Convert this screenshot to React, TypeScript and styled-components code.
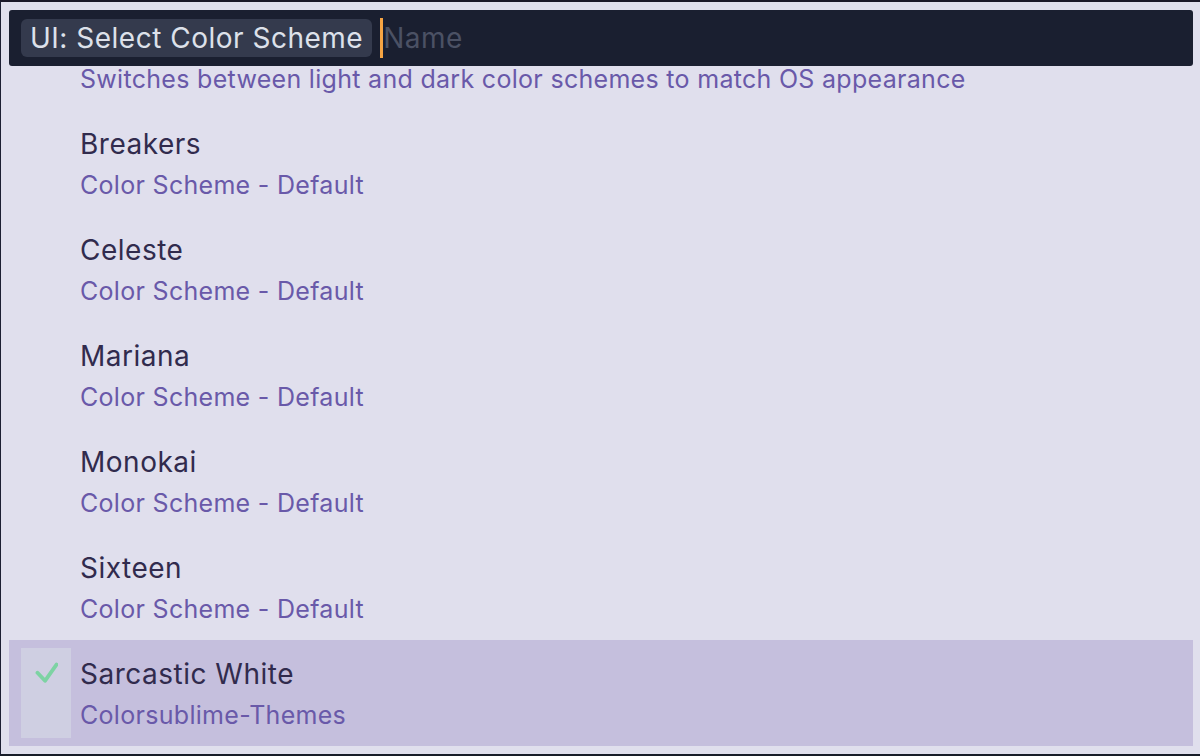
import React from "react";
import styled, { createGlobalStyle } from "styled-components";

const GlobalStyle = createGlobalStyle`
  html, body {
    margin: 0;
    padding: 0;
    background: #1a1a28;
  }
  * {
    box-sizing: border-box;
  }
`;

const Frame = styled.div`
  width: 1200px;
  height: 756px;
  border-top: 2px solid #1a1828;
  border-left: 1px solid #1d1f33;
  border-bottom: 2px solid #171c28;
  background: #e0dfed;
  padding: 8px 7px 8px 8px;
  display: flex;
  flex-direction: column;
  font-family: Inter, "Noto Sans", sans-serif;
  overflow: hidden;
`;

const InputBar = styled.div`
  height: 56px;
  flex-shrink: 0;
  background: #1a1f30;
  border-radius: 3px;
  display: flex;
  align-items: center;
  padding: 0 12px;
  position: relative;
  z-index: 2;
`;

const Chip = styled.div`
  height: 38px;
  padding: 0 9px;
  border-radius: 6px;
  background: #343a4d;
  color: #dde1ea;
  font-size: 28px;
  letter-spacing: 0.5px;
  display: flex;
  align-items: center;
  white-space: nowrap;
`;

const Caret = styled.span`
  width: 3px;
  height: 40px;
  margin-left: 8px;
  background: #f6a443;
`;

const Placeholder = styled.span`
  color: #4b5164;
  font-size: 28px;
  letter-spacing: 0.5px;
`;

const Viewport = styled.div`
  flex: 1;
  overflow: hidden;
`;

const List = styled.div<{ $offset: number }>`
  margin-top: ${(p) => -p.$offset}px;
  display: flex;
  flex-direction: column;
`;

const Row = styled.div<{ $selected?: boolean }>`
  height: 106px;
  display: flex;
  padding: 8px 0 8px 12px;
  background: ${(p) => (p.$selected ? "#c5bfdd" : "transparent")};
`;

const CheckCell = styled.div<{ $selected?: boolean }>`
  width: 50px;
  height: 90px;
  flex-shrink: 0;
  background: ${(p) => (p.$selected ? "#cfcfe2" : "transparent")};
  display: flex;
  justify-content: center;
  padding-top: 14px;
`;

const Texts = styled.div`
  margin-left: 9px;
  padding-top: 8px;
  display: flex;
  flex-direction: column;
`;

const Title = styled.div`
  font-size: 28px;
  letter-spacing: 0.5px;
  line-height: 36px;
  color: #312b4d;
  white-space: nowrap;
`;

const Subtitle = styled.div`
  font-size: 25px;
  letter-spacing: 0.3px;
  line-height: 36px;
  margin-top: 5px;
  color: #6959a9;
  white-space: nowrap;
`;

const items = [
  {
    title: "Auto",
    sub: "Switches between light and dark color schemes to match OS appearance",
  },
  { title: "Breakers", sub: "Color Scheme - Default" },
  { title: "Celeste", sub: "Color Scheme - Default" },
  { title: "Mariana", sub: "Color Scheme - Default" },
  { title: "Monokai", sub: "Color Scheme - Default" },
  { title: "Sixteen", sub: "Color Scheme - Default" },
  { title: "Sarcastic White", sub: "Colorsublime-Themes", selected: true },
];

function Check() {
  return (
    <svg width="24" height="22" viewBox="0 0 24 22">
      <polyline
        points="3.5,10.7 11,18.8 22.5,2.5"
        fill="none"
        stroke="#7dd3a3"
        strokeWidth="3.8"
        strokeLinecap="round"
        strokeLinejoin="round"
      />
    </svg>
  );
}

export default function App() {
  return (
    <>
      <GlobalStyle />
      <Frame>
        <InputBar>
          <Chip>UI: Select Color Scheme</Chip>
          <Caret />
          <Placeholder>Name</Placeholder>
        </InputBar>
        <Viewport>
          <List $offset={62}>
            {items.map((it) => (
              <Row key={it.title} $selected={it.selected}>
                <CheckCell $selected={it.selected}>
                  {it.selected && <Check />}
                </CheckCell>
                <Texts>
                  <Title>{it.title}</Title>
                  <Subtitle>{it.sub}</Subtitle>
                </Texts>
              </Row>
            ))}
          </List>
        </Viewport>
      </Frame>
    </>
  );
}
